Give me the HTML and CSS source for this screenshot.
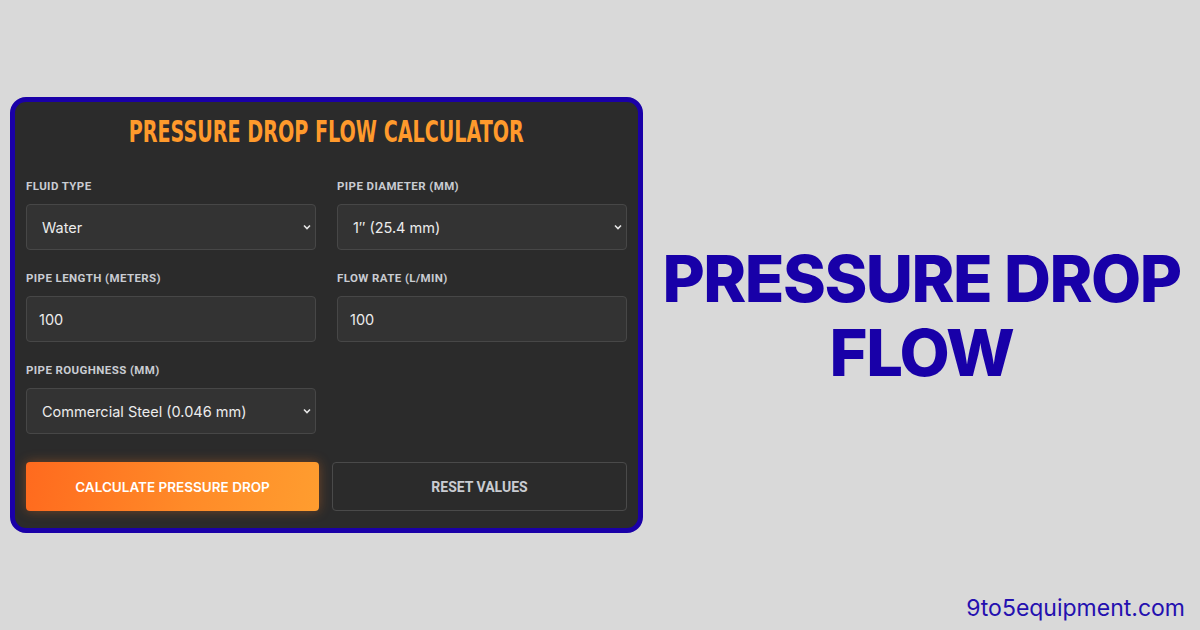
FILE: index.html
```html
<!DOCTYPE html>
<html lang="en">
<head>
<meta charset="utf-8">
<title>Pressure Drop Flow Calculator</title>
<link rel="stylesheet" href="styles.css">
</head>
<body>
<div class="page">
  <section class="card">
    <h1 class="card-title"><span class="title-text">PRESSURE DROP FLOW CALCULATOR</span></h1>
    <div class="form-grid">
      <div class="field">
        <label class="field-label">FLUID TYPE</label>
        <select class="control control-select"><option>Water</option></select>
      </div>
      <div class="field">
        <label class="field-label">PIPE DIAMETER (MM)</label>
        <select class="control control-select"><option>1″ (25.4 mm)</option></select>
      </div>
      <div class="field">
        <label class="field-label">PIPE LENGTH (METERS)</label>
        <input class="control control-input" type="text" value="100">
      </div>
      <div class="field">
        <label class="field-label">FLOW RATE (L/MIN)</label>
        <input class="control control-input" type="text" value="100">
      </div>
      <div class="field">
        <label class="field-label">PIPE ROUGHNESS (MM)</label>
        <select class="control control-select"><option>Commercial Steel (0.046 mm)</option></select>
      </div>
    </div>
    <div class="actions">
      <button class="btn btn-primary">CALCULATE PRESSURE DROP</button>
      <button class="btn btn-secondary">RESET VALUES</button>
    </div>
  </section>
  <div class="hero">
    <h2 class="hero-title">PRESSURE DROP<br>FLOW</h2>
  </div>
</div>
<div class="domain">9to5equipment.com</div>
</body>
</html>
```

FILE: styles.css
```css
* { box-sizing: border-box; }

html, body {
  margin: 0;
  padding: 0;
}

body {
  width: 1200px;
  height: 630px;
  background: #d9d9d9;
  overflow: hidden;
  font-family: "Inter", "Open Sans", sans-serif;
  position: relative;
}

.page {
  display: flex;
  align-items: flex-start;
  padding: 97px 0 0 10px;
}

.card {
  width: 633px;
  flex: none;
  background: #2b2b2b;
  border: 5px solid #1a00a8;
  border-radius: 16px;
  padding: 10px 11px 17px 11px;
}

.card-title {
  margin: 0;
  height: 40px;
  line-height: 40px;
  text-align: center;
  font-family: "DejaVu Sans Condensed", "DejaVu Sans", sans-serif;
  font-weight: bold;
  font-size: 30px;
  color: #ff9a2c;
  white-space: nowrap;
}

.title-text {
  display: inline-block;
  transform: scaleX(0.71);
  transform-origin: center;
}

.form-grid {
  display: grid;
  grid-template-columns: 1fr 1fr;
  column-gap: 21px;
  row-gap: 21px;
  margin-top: 27px;
}

.field {
  display: flex;
  flex-direction: column;
}

.field-label {
  font-family: "Roboto", sans-serif;
  font-weight: 700;
  font-size: 11.5px;
  line-height: 14px;
  letter-spacing: 0.4px;
  color: #c9ccd2;
  margin-bottom: 11px;
}

.control {
  height: 46px;
  width: 100%;
  background-color: #333333;
  border: 1px solid #474747;
  border-radius: 4px;
  color: #ececec;
  font-family: "Inter", sans-serif;
  font-size: 14.5px;
  outline: none;
  margin: 0;
}

.control-input {
  padding: 0 12px;
}

.control-select {
  appearance: none;
  -webkit-appearance: none;
  padding: 0 30px 0 15px;
  background-image: url("data:image/svg+xml,%3Csvg xmlns='http://www.w3.org/2000/svg' width='8' height='6' viewBox='0 0 8 6'%3E%3Cpath d='M1 1.5 L4 4.5 L7 1.5' fill='none' stroke='%23e6e6e6' stroke-width='1.6'/%3E%3C/svg%3E");
  background-repeat: no-repeat;
  background-position: right 4px center;
  background-size: 8px 6px;
}

.actions {
  display: flex;
  gap: 13px;
  margin-top: 28px;
}

.btn {
  flex: 1;
  height: 49px;
  border-radius: 4px;
  font-size: 13.5px;
  cursor: pointer;
}

.btn-primary {
  border: none;
  background: linear-gradient(100deg, #ff6a1e 0%, #ff8a28 55%, #ff9d2f 100%);
  color: #ffffff;
  font-family: "Inter", sans-serif;
  font-weight: 600;
  box-shadow: 0 0 12px rgba(255, 120, 30, 0.35);
}

.btn-secondary {
  background: transparent;
  border: 1px solid #4a4a4a;
  color: #c9ccd2;
  font-family: "Roboto", sans-serif;
  font-weight: 700;
  font-size: 14px;
}

.hero {
  flex: 1;
  display: flex;
  justify-content: center;
  padding-top: 145px;
}

.hero-title {
  margin: 0;
  text-align: center;
  font-family: "Inter", sans-serif;
  font-weight: 800;
  font-size: 65px;
  line-height: 74px;
  color: #1800a8;
  letter-spacing: -1.5px;
}

.domain {
  position: absolute;
  right: 15px;
  bottom: 8px;
  font-family: "Inter", sans-serif;
  font-size: 23px;
  color: #2410b0;
}
```
